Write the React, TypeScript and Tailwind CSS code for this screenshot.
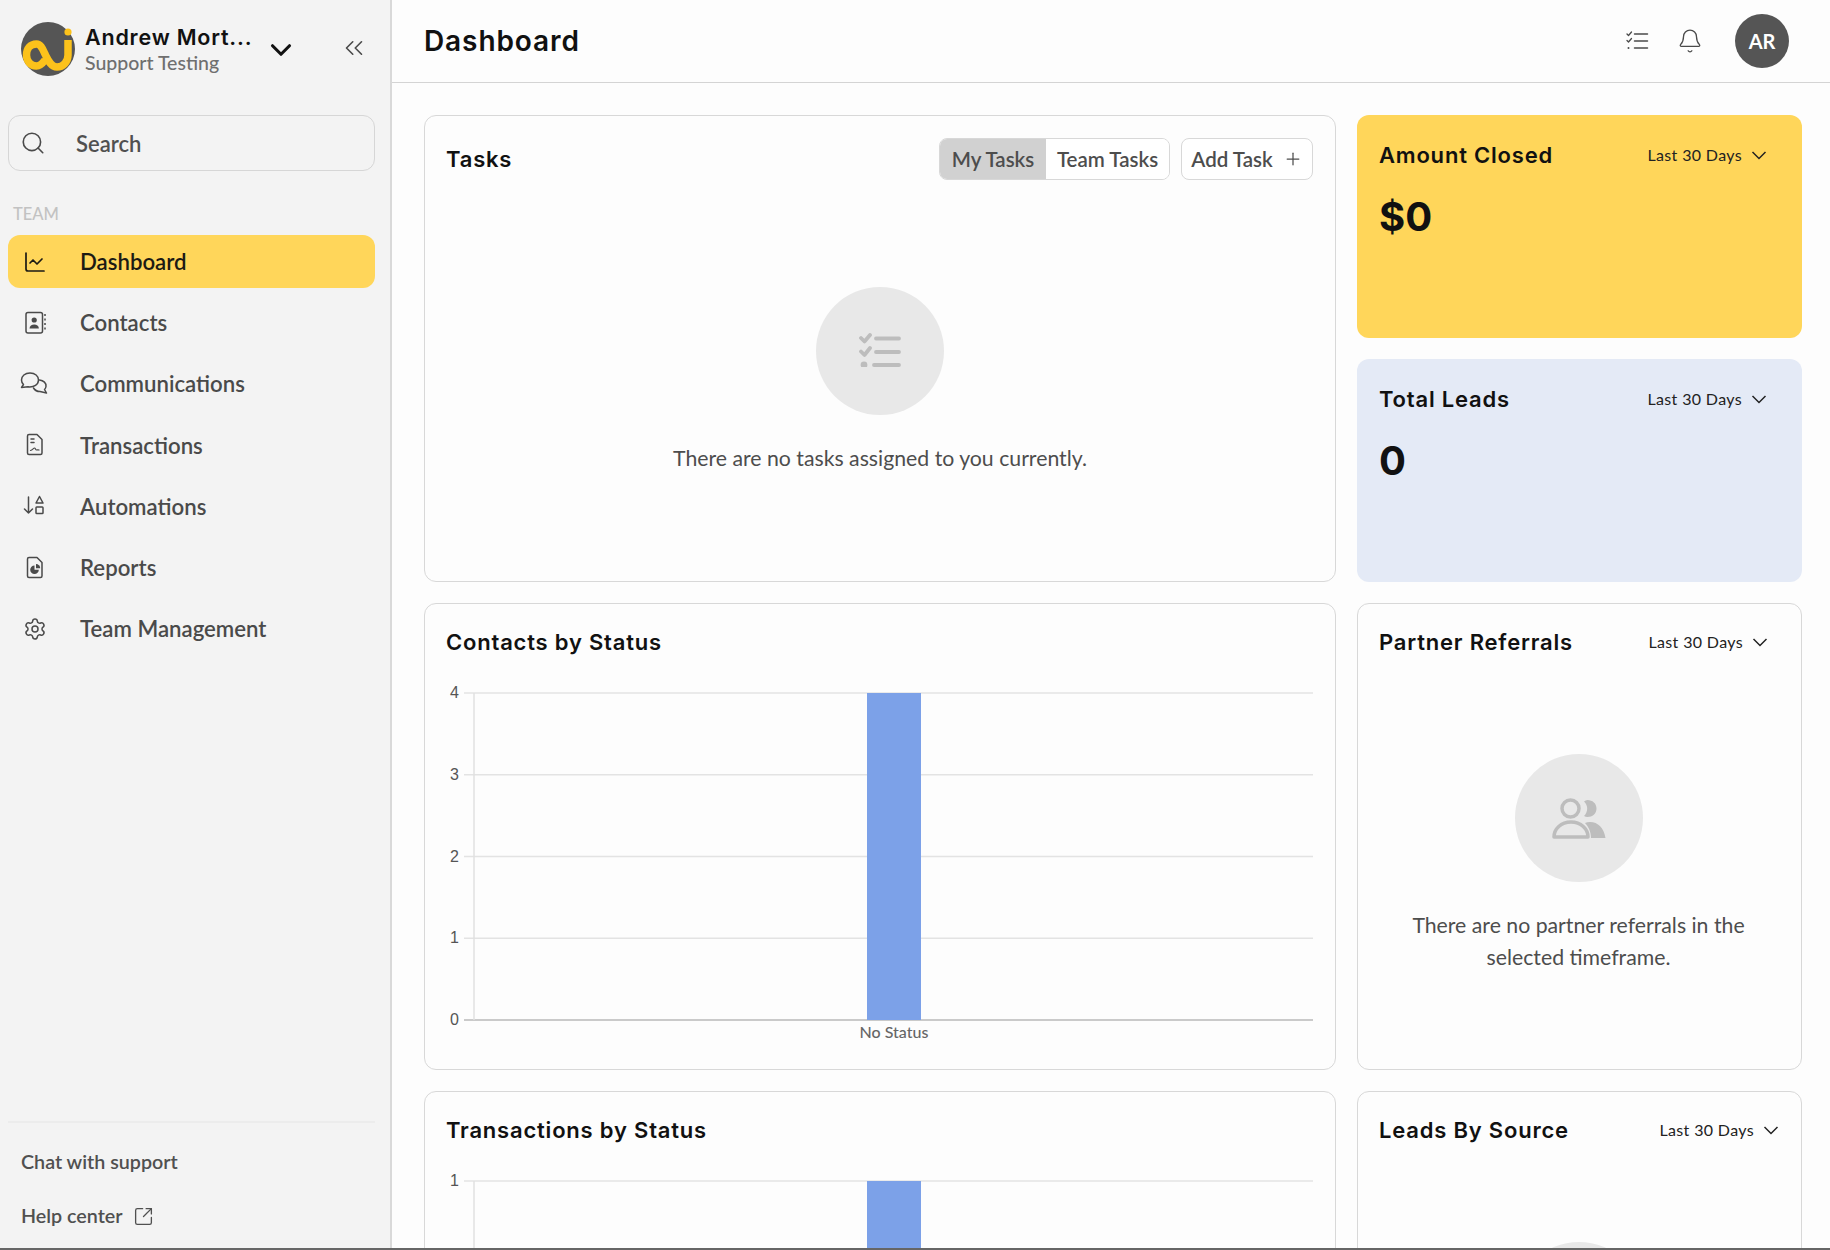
import { Bell, ChartLine, ChevronDown, ChevronsLeft, Plus, Search, Settings, SquareArrowOutUpRight } from 'lucide-react';
import type { ReactNode } from 'react';

const heading = "font-['Inter',sans-serif]";

function IconBox({ children }: { children: ReactNode }) {
  return (
    <svg viewBox="0 0 24 24" fill="none" stroke="currentColor" strokeWidth="1.5" strokeLinecap="round" strokeLinejoin="round" className="h-6 w-6 shrink-0 overflow-visible">
      {children}
    </svg>
  );
}

const ContactsIcon = () => (
  <IconBox>
    <rect x="3" y="1.5" width="16.5" height="20.5" rx="2" />
    <circle cx="11.2" cy="9" r="2.6" fill="currentColor" stroke="none" />
    <path d="M6.5 17.5c0-5.2 9.4-5.2 9.4 0z" fill="currentColor" stroke="none" />
    <path d="M22 3v18" strokeDasharray="2 2.5" strokeLinecap="butt" />
  </IconBox>
);

const CommunicationsIcon = () => (
  <IconBox>
    <path d="M7 1C2 1-1.5 4-1.5 8c0 2 .9 3.5 2 4.5l-2 3 6.5-.7c6 .7 10.5-2.3 10.5-6.8C15.500 4 12 1 7 1z" />
    <path d="M16.500 8c4 .5 7 3 6.500 6.500-.2 1.500-1 2.500-1.500 3l2 3.500-6.500-1.500c-3 0-5-1-6.500-3.500" />
  </IconBox>
);

const TransactionsIcon = () => (
  <IconBox>
    <path d="M6 1.500h8l5 5V20a1.500 1.500 0 0 1-1.500 1.500h-11.500A1.500 1.500 0 0 1 4.500 20V3A1.500 1.500 0 0 1 6 1.500z" />
    <path d="M8 6h3M8 9.500h3" />
    <path d="M7.500 17.500c2-.3 3-2.500 4-2.500s1 2 2 2 1.500-.5 2.500 0" strokeWidth="1.200" />
  </IconBox>
);

const AutomationsIcon = () => (
  <IconBox>
    <path d="M5.500 2v16M1.500 14l4 4 4-4" />
    <path d="M16.500 1.500l3.500 6.500h-7z" />
    <rect x="13" y="12" width="7" height="6.500" rx=".8" />
  </IconBox>
);

const ReportsIcon = () => (
  <IconBox>
    <path d="M6 1.500h8l5 5V20a1.500 1.500 0 0 1-1.500 1.500h-11.500A1.500 1.500 0 0 1 4.500 20V3A1.500 1.500 0 0 1 6 1.500z" />
    <path d="M11.500 9.500a4.300 4.300 0 1 0 4.300 4.300h-4.300z" fill="currentColor" stroke="none" />
    <path d="M13 8v4.200h4.200A4.200 4.200 0 0 0 13 8z" fill="currentColor" stroke="none" />
  </IconBox>
);

const TaskListIcon = () => (
  <IconBox>
    <path d="M2 6l1.500 1.500L6.500 4M2 12.500l1.500 1.500 3-3.500" strokeWidth="1.300" />
    <path d="M9.500 6h13M9.500 13h13M9.500 20h13" />
    <circle cx="3.500" cy="20" r="1" fill="currentColor" stroke="none" />
  </IconBox>
);

function Logo() {
  return (
    <svg viewBox="0 0 54 54" className="h-[54px] w-[54px] shrink-0">
      <circle cx="27" cy="27" r="27" fill="#555555" />
      <path
        d="M47 18v15c0 7-5 12-11 12-6 0-9-7-12-13-2-4-4-10-8.500-10C9 22 5.500 27 5.500 33s4 11 10 11c3.500 0 5.500-2 8.500-6"
        fill="none"
        stroke="#fcc21b"
        strokeWidth="7.500"
      />
      <circle cx="47" cy="10" r="3.600" fill="#fcc21b" />
    </svg>
  );
}

const navItems = [
  { label: 'Contacts', icon: <ContactsIcon /> },
  { label: 'Communications', icon: <CommunicationsIcon /> },
  { label: 'Transactions', icon: <TransactionsIcon /> },
  { label: 'Automations', icon: <AutomationsIcon /> },
  { label: 'Reports', icon: <ReportsIcon /> },
  { label: 'Team Management', icon: <Settings size={24} strokeWidth={1.5} /> },
];

function Sidebar() {
  return (
    <aside className="flex h-full w-[392px] shrink-0 flex-col border-r-2 border-[#d9d9d9] bg-[#f3f3f3] pr-[15px] pl-2">
      <div className="flex h-[115px] items-start pl-[13px] pt-[22px]">
        <Logo />
        <div className="ml-[10px] w-[170px]">
          <div className={`${heading} mt-[2px] text-[21.500px] leading-[27px] font-semibold tracking-[0.8px] whitespace-nowrap text-[#111]`}>Andrew Mort...</div>
          <div className="text-[19.500px] leading-[24px] font-medium text-[#6f6f6f]">Support Testing</div>
        </div>
        <ChevronDown size={34} strokeWidth={2.200} className="mt-[11px] ml-[9px] text-[#111]" />
        <ChevronsLeft size={30} strokeWidth={1.300} className="mt-[11px] ml-[41px] text-[#4a4a4a]" />
      </div>

      <div className="flex h-[56px] items-center rounded-xl border border-[#d6d6d6] pl-[11px]">
        <Search size={26} strokeWidth={1.500} className="text-[#4a4a4a]" />
        <span className="ml-[30px] text-[22px] font-semibold text-[#505050]">Search</span>
      </div>

      <div className="mt-[33px] pl-[5px] text-[16.500px] leading-[20px] font-medium text-[#c2c2c2]">TEAM</div>

      <nav className="mt-[11px] flex flex-col gap-[8.250px]">
        <div className="flex h-[53px] items-center gap-[33px] rounded-xl bg-[#ffd65a] px-[15px] text-[#1c1a14]">
          <ChartLine size={24} strokeWidth={1.700} />
          <span className="text-[22.200px] font-semibold">Dashboard</span>
        </div>
        {navItems.map((item) => (
          <div key={item.label} className="flex h-[53px] items-center gap-[33px] px-[15px] text-[#4a4a4a]">
            {item.icon}
            <span className="text-[22.200px] font-semibold">{item.label}</span>
          </div>
        ))}
      </nav>

      <div className="mt-auto border-t-2 border-[#ececec] px-[13px] pt-[27px] pb-[20px] text-[19.700px] leading-[24px] font-semibold text-[#505050]">
        <div>Chat with support</div>
        <div className="mt-[30px] flex items-center gap-[10px]">
          Help center
          <SquareArrowOutUpRight size={21} strokeWidth={1.500} />
        </div>
      </div>
    </aside>
  );
}

function RangeSelect({ marginRight }: { marginRight: string }) {
  return (
    <div className={`flex items-center gap-[9px] text-[16px] tracking-[0.35px] text-[#222] ${marginRight}`}>
      Last 30 Days
      <svg viewBox="0 0 16 16" fill="none" stroke="currentColor" strokeWidth="1.500" className="h-4 w-4">
        <path d="M1.500 5l6.500 6.500L14.500 5" />
      </svg>
    </div>
  );
}

function CardHeading({ children }: { children: ReactNode }) {
  return <h2 className={`${heading} text-[22px] leading-[26px] font-semibold tracking-[0.8px] text-[#111]`}>{children}</h2>;
}

function StatCard({ title, value, color }: { title: string; value: string; color: string }) {
  return (
    <section className={`h-[223px] rounded-xl border border-transparent px-[21px] pt-[26px] ${color}`}>
      <div className="flex items-center justify-between">
        <CardHeading>{title}</CardHeading>
        <RangeSelect marginRight="mr-[13px]" />
      </div>
      <div className={`${heading} mt-[25px] text-[40px] leading-[48px] font-bold text-[#111]`}>{value}</div>
    </section>
  );
}

function EmptyCircle({ children }: { children: ReactNode }) {
  return <div className="flex h-[128px] w-[128px] items-center justify-center rounded-full bg-[#e8e8e8] text-[#bdbdbd]">{children}</div>;
}

function BarChart({ ticks, clipped }: { ticks: number[]; clipped?: boolean }) {
  const top = 12;
  const bottom = 339;
  const step = (bottom - top) / (ticks.length - 1);
  return (
    <svg viewBox="0 0 870 366" className="mt-[26px] h-[366px] w-[870px]">
      {ticks.map((tick, i) => {
        const y = top + i * step;
        return (
          <g key={tick}>
            <line x1="18" x2="867" y1={y} y2={y} stroke={tick === 0 ? '#b9b9b9' : '#e3e3e3'} strokeWidth="1.500" />
            {!(clipped && tick === 0) && (
              <text x="13" y={y + 5} textAnchor="end" className="fill-[#555] font-['Liberation_Sans',sans-serif] text-[16px]">
                {tick}
              </text>
            )}
          </g>
        );
      })}
      <line x1="28" x2="28" y1={top} y2={bottom} stroke="#e0e0e0" strokeWidth="1.500" />
      <rect x="421" y={top} width="54" height={bottom - top} fill="#7ca1e8" />
      {!clipped && (
        <text x="448" y="357" textAnchor="middle" className="fill-[#666] text-[16px] font-medium">
          No Status
        </text>
      )}
    </svg>
  );
}

function Dashboard() {
  return (
    <div className="grid grid-cols-[912px_445px] gap-[21px] pt-[32px] pl-[32px]">
      <section className="h-[467px] rounded-xl border border-[#d8d8d8] px-[21px] pt-[22px]">
        <div className="flex items-center justify-between">
          <CardHeading>Tasks</CardHeading>
          <div className="mr-[1px] flex items-center gap-[11px] text-[20.500px] font-semibold text-[#4d4d4d]">
            <div className="flex h-[42px] overflow-hidden rounded-lg border border-[#d8d8d8]">
              <span className="flex w-[106px] items-center justify-center bg-[#d1d1d1]">My Tasks</span>
              <span className="flex w-[123px] items-center justify-center bg-white">Team Tasks</span>
            </div>
            <div className="flex h-[42px] w-[132px] items-center justify-center gap-[10px] rounded-lg border border-[#d8d8d8] bg-white">
              Add Task
              <Plus size={20} strokeWidth={1.500} />
            </div>
          </div>
        </div>
        <div className="mt-[107px] flex flex-col items-center">
          <EmptyCircle>
            <svg viewBox="0 0 42 34" fill="none" stroke="currentColor" strokeWidth="3.800" strokeLinecap="round" strokeLinejoin="round" className="mb-[2px] h-[34px] w-[42px]">
              <path d="M2 5l3.500 3.500L11 2M2 18.500L5.500 22 11 15" />
              <path d="M17 5.500h23M17 19h23M15 32h25" />
              <circle cx="5" cy="32" r="1.500" fill="currentColor" />
            </svg>
          </EmptyCircle>
          <p className="mt-[27px] text-[21.250px] leading-[32px] text-[#4d4d4d]">There are no tasks assigned to you currently.</p>
        </div>
      </section>

      <div className="flex h-[467px] flex-col gap-[21px]">
        <StatCard title="Amount Closed" value="$0" color="bg-[#ffd65a]" />
        <StatCard title="Total Leads" value="0" color="bg-[#e4eaf6]" />
      </div>

      <section className="h-[467px] rounded-xl border border-[#d8d8d8] px-[21px] pt-[25px]">
        <CardHeading>Contacts by Status</CardHeading>
        <BarChart ticks={[4, 3, 2, 1, 0]} />
      </section>

      <section className="h-[467px] rounded-xl border border-[#d8d8d8] px-[21px] pt-[25px]">
        <div className="flex items-center justify-between">
          <CardHeading>Partner Referrals</CardHeading>
          <RangeSelect marginRight="mr-[12px]" />
        </div>
        <div className="mt-[99px] flex flex-col items-center pr-[2px]">
          <EmptyCircle>
            <svg viewBox="0 0 54 42" className="h-[42px] w-[54px]">
              <path d="M32 4.500a9 9 0 0 1 3.500-1.500c5 0 9 3.500 9 8.500s-4 8.500-9 8.500c-1.300 0-2.500-.3-3.500-1 2-2 3.200-4.700 3.200-7.500S34 6.500 32 4.500z" fill="currentColor" />
              <path d="M38 25c8 0 14 6 15.500 16H39c0-6-2.500-11.500-6-15 1.500-.7 3.200-1 5-1z" fill="currentColor" />
              <circle cx="18.500" cy="11.500" r="8.500" fill="none" stroke="currentColor" strokeWidth="3.500" />
              <path d="M2 40c0-8 7-15 17-15s17 7 17 15z" fill="none" stroke="currentColor" strokeWidth="3.500" strokeLinejoin="round" />
            </svg>
          </EmptyCircle>
          <p className="mt-[27px] w-[360px] text-center text-[21.250px] leading-[32px] text-[#4d4d4d]">There are no partner referrals in the selected timeframe.</p>
        </div>
      </section>

      <section className="h-[467px] rounded-xl border border-[#d8d8d8] px-[21px] pt-[25px]">
        <CardHeading>Transactions by Status</CardHeading>
        <BarChart ticks={[1, 0]} clipped />
      </section>

      <section className="h-[467px] rounded-xl border border-[#d8d8d8] px-[21px] pt-[25px]">
        <div className="flex items-center justify-between">
          <CardHeading>Leads By Source</CardHeading>
          <RangeSelect marginRight="mr-[1px]" />
        </div>
        <div className="mt-[99px] flex flex-col items-center pr-[2px]">
          <EmptyCircle>{null}</EmptyCircle>
        </div>
      </section>
    </div>
  );
}

export default function App() {
  return (
    <div className="flex h-screen w-full overflow-hidden border-b-2 border-[#666] bg-[#fdfdfd] font-['Lato',sans-serif]">
      <Sidebar />
      <main className="min-w-0 flex-1 overflow-hidden">
        <header className="flex h-[83px] items-center justify-between border-b border-[#d4d4d4] pr-[41px] pl-[32px]">
          <h1 className={`${heading} text-[28px] font-semibold tracking-[0.9px] text-[#111]`}>Dashboard</h1>
          <div className="mb-[1px] flex items-center text-[#4a4a4a]">
            <span className="mb-[2px]">
              <TaskListIcon />
            </span>
            <Bell size={26} strokeWidth={1.200} className="ml-[28px]" />
            <div className="ml-[32px] flex h-[54px] w-[54px] items-center justify-center rounded-full bg-[#555] text-[20px] font-bold text-white">AR</div>
          </div>
        </header>
        <Dashboard />
      </main>
    </div>
  );
}
